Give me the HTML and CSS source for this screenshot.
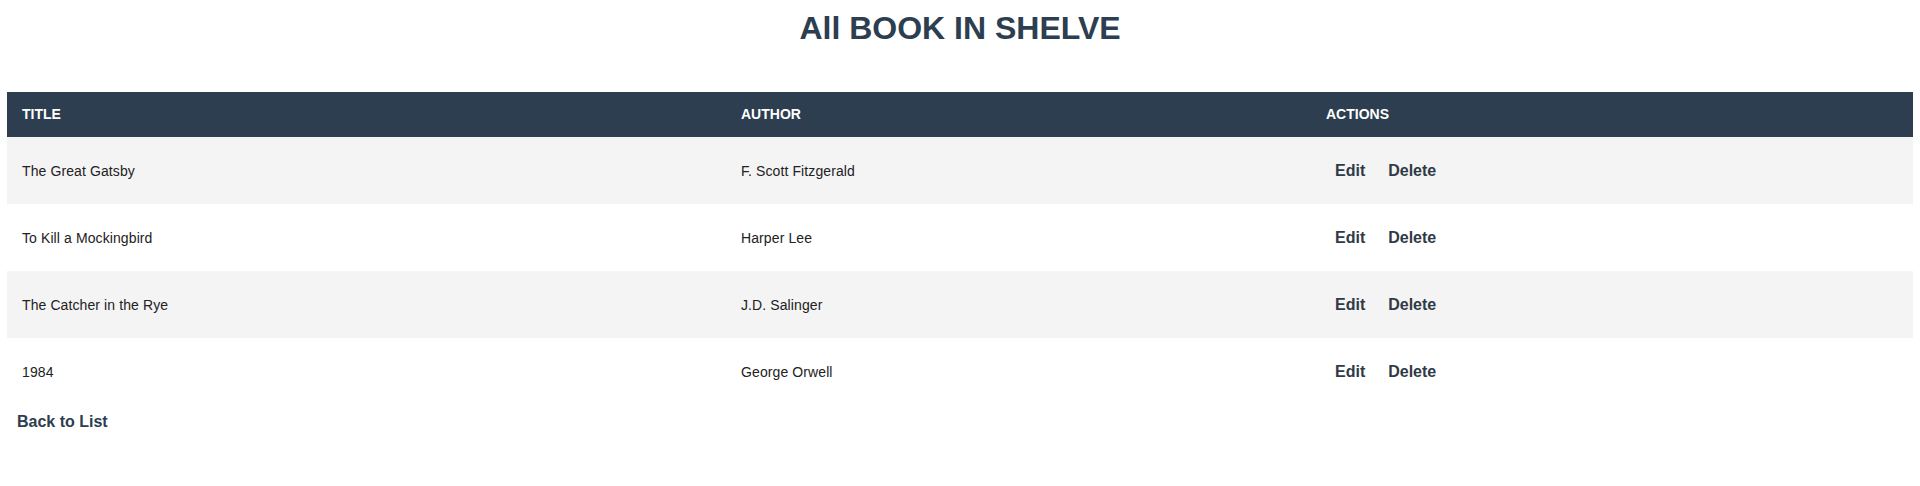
FILE: index.html
```html
<!DOCTYPE html>
<html lang="en">
<head>
<meta charset="utf-8">
<title>All Book in Shelve</title>
<link rel="stylesheet" href="styles.css">
</head>
<body>
<div class="page">
  <h1 class="page-title">All BOOK IN SHELVE</h1>
  <table class="books">
    <colgroup>
      <col class="col-title">
      <col class="col-author">
      <col class="col-actions">
    </colgroup>
    <thead>
      <tr>
        <th>TITLE</th>
        <th>AUTHOR</th>
        <th>ACTIONS</th>
      </tr>
    </thead>
    <tbody>
      <tr>
        <td>The Great Gatsby</td>
        <td>F. Scott Fitzgerald</td>
        <td class="actions"><a class="btn" href="#">Edit</a><a class="btn" href="#">Delete</a></td>
      </tr>
      <tr>
        <td>To Kill a Mockingbird</td>
        <td>Harper Lee</td>
        <td class="actions"><a class="btn" href="#">Edit</a><a class="btn" href="#">Delete</a></td>
      </tr>
      <tr>
        <td>The Catcher in the Rye</td>
        <td>J.D. Salinger</td>
        <td class="actions"><a class="btn" href="#">Edit</a><a class="btn" href="#">Delete</a></td>
      </tr>
      <tr>
        <td>1984</td>
        <td>George Orwell</td>
        <td class="actions"><a class="btn" href="#">Edit</a><a class="btn" href="#">Delete</a></td>
      </tr>
    </tbody>
  </table>
  <a class="back" href="#">Back to List</a>
</div>
</body>
</html>
```

FILE: styles.css
```css
html, body {
  margin: 0;
  padding: 0;
  background: #ffffff;
}

body {
  font-family: "Liberation Sans", Arial, sans-serif;
  color: #222222;
}

.page {
  padding: 0 7px;
}

.page-title {
  margin: 10px 0 45px;
  text-align: center;
  font-size: 32px;
  line-height: 37px;
  font-weight: bold;
  color: #2c3e50;
}

.books {
  width: 1906px;
  border-collapse: collapse;
  table-layout: fixed;
}

.col-title { width: 719px; }
.col-author { width: 585px; }
.col-actions { width: 602px; }

.books th {
  background: #2c3e50;
  color: #ffffff;
  font-size: 14px;
  line-height: 17px;
  font-weight: bold;
  text-align: left;
  padding: 14px 15px;
}

.books td {
  font-size: 14px;
  line-height: 16px;
  padding: 16px 15px;
  vertical-align: middle;
  color: #222222;
  letter-spacing: 0.1px;
}

.books tbody tr:nth-child(odd) {
  background: #f4f4f4;
}

.actions {
  white-space: nowrap;
}

.btn {
  display: inline-block;
  padding: 8px 9px;
  margin-right: 5px;
  font-size: 16px;
  line-height: 19px;
  font-weight: bold;
  letter-spacing: 0;
  color: #2f3a46;
  text-decoration: none;
  vertical-align: middle;
}

.back {
  display: inline-block;
  padding: 8px 10px;
  font-size: 16px;
  line-height: 18px;
  font-weight: bold;
  color: #2c3e50;
  text-decoration: none;
}
```
